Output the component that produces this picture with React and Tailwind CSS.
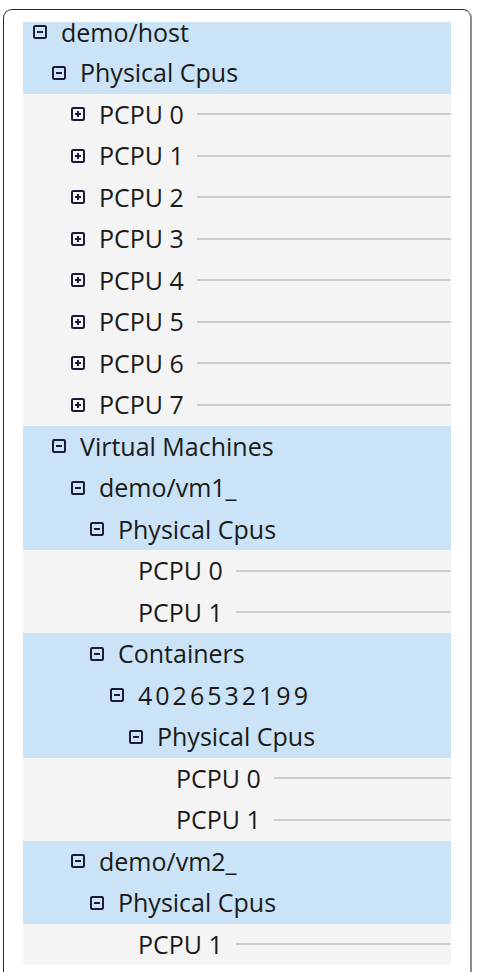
import React from 'react';

const rows = [
  { depth: 0, label: 'demo/host', icon: 'minus' },
  { depth: 1, label: 'Physical Cpus', icon: 'minus' },
  { depth: 2, label: 'PCPU 0', icon: 'plus' },
  { depth: 2, label: 'PCPU 1', icon: 'plus' },
  { depth: 2, label: 'PCPU 2', icon: 'plus' },
  { depth: 2, label: 'PCPU 3', icon: 'plus' },
  { depth: 2, label: 'PCPU 4', icon: 'plus' },
  { depth: 2, label: 'PCPU 5', icon: 'plus' },
  { depth: 2, label: 'PCPU 6', icon: 'plus' },
  { depth: 2, label: 'PCPU 7', icon: 'plus' },
  { depth: 1, label: 'Virtual Machines', icon: 'minus' },
  { depth: 2, label: 'demo/vm1_', icon: 'minus' },
  { depth: 3, label: 'Physical Cpus', icon: 'minus' },
  { depth: 4, label: 'PCPU 0' },
  { depth: 4, label: 'PCPU 1' },
  { depth: 3, label: 'Containers', icon: 'minus' },
  { depth: 4, label: '4026532199', icon: 'minus', wide: true },
  { depth: 5, label: 'Physical Cpus', icon: 'minus' },
  { depth: 6, label: 'PCPU 0' },
  { depth: 6, label: 'PCPU 1' },
  { depth: 2, label: 'demo/vm2_', icon: 'minus' },
  { depth: 3, label: 'Physical Cpus', icon: 'minus' },
  { depth: 4, label: 'PCPU 1' },
];

const indent = ['pl-[10px]', 'pl-[29px]', 'pl-[48px]', 'pl-[67px]', 'pl-[87px]', 'pl-[106px]', 'pl-[125px]'];

function ToggleBox({ kind }) {
  return (
    <svg width="14" height="14" viewBox="0 0 14 14" className="shrink-0 block">
      <rect x="1" y="1" width="12" height="12" rx="1.2" fill="none" stroke="#1b1b38" strokeWidth="2" />
      <path d="M4 7h6" stroke="#1b1b38" strokeWidth="2" />
      {kind === 'plus' ? <path d="M7 4v6" stroke="#1b1b38" strokeWidth="2" /> : null}
    </svg>
  );
}

function TreeRow({ row, first }) {
  // rows with a minus box are group headers, everything else is a cpu lane
  const isGroup = row.icon === 'minus';
  return (
    <div
      className={`flex ${first ? 'items-start h-[30px]' : 'items-center h-[41.5px]'} ${indent[row.depth]} ${
        isGroup ? 'bg-[#cae3f6]' : 'bg-[#f4f4f4]'
      }`}
    >
      {row.icon ? (
        <span className={first ? 'mt-[3px]' : ''}>
          <ToggleBox kind={row.icon} />
        </span>
      ) : (
        <span className="w-[14px] shrink-0" />
      )}
      <span
        className={`ml-[14px] text-[25px] font-medium leading-[21px] text-[#1a1a1a] whitespace-nowrap ${
          row.wide ? 'tracking-[3px]' : ''
        }`}
      >
        {row.label}
      </span>
      {!isGroup ? <span className="ml-[13px] flex-1 h-[2px] bg-[#cdcdcd]" /> : null}
    </div>
  );
}

export default function App() {
  return (
    <div className="w-[480px] h-[972px] bg-white overflow-hidden pt-[9px] pl-[3px]" style={{ fontFamily: '"Open Sans", "Noto Sans", sans-serif' }}>
      <div className="w-[469px] h-[980px] rounded-t-[9px] border-l border-t border-[#2a2a2a] border-r-2 border-r-[#8c8c8c] pt-[12px] pl-[19px] pr-[19px]">
        <div>
          {rows.map((row, i) => (
            <TreeRow key={i} row={row} first={i === 0} />
          ))}
        </div>
      </div>
    </div>
  );
}
